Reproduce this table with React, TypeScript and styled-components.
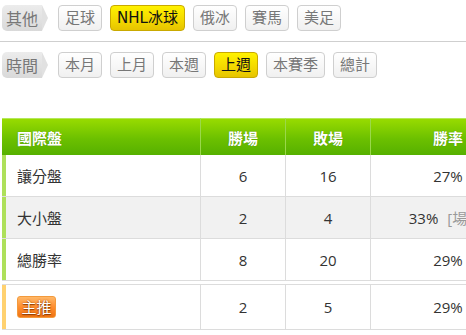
import React from "react";
import styled, { createGlobalStyle } from "styled-components";

const GlobalStyle = createGlobalStyle`
  html, body {
    margin: 0;
    padding: 0;
    background: #fff;
    overflow: hidden;
  }
  body {
    font-family: "Open Sans", "Noto Sans CJK TC", sans-serif;
    color: #333;
  }
`;

const Page = styled.div`
  width: 466px;
  height: 335px;
  overflow: hidden;
`;

const FilterRow = styled.div`
  display: flex;
  align-items: center;
  gap: 8px;
  padding: 0 2px;
  height: 26px;
`;

const Divider = styled.div`
  height: 1px;
  background: #cfcfcf;
  margin: 10px 0;
`;

const Label = styled.div`
  position: relative;
  height: 26px;
  box-sizing: border-box;
  padding: 0 4px 0 4px;
  margin-right: 8px;
  display: flex;
  align-items: center;
  font-size: 16px;
  color: #777;
  background: linear-gradient(#ececec, #d9d9d9);
  border-radius: 5px 0 0 5px;

  &::after {
    content: "";
    position: absolute;
    right: -6px;
    top: 0;
    border-style: solid;
    border-width: 13px 0 13px 6px;
    border-color: transparent transparent transparent #e1e1e1;
  }
`;

const FilterButton = styled.button<{ $active?: boolean }>`
  height: 26px;
  box-sizing: border-box;
  padding: 0 6px;
  font-family: "DejaVu Sans", "Noto Sans CJK TC", sans-serif;
  font-size: 15px;
  line-height: 24px;
  border-radius: 4px;
  cursor: pointer;
  color: ${(p) => (p.$active ? "#111" : "#777")};
  border: 1px solid ${(p) => (p.$active ? "#c9a900" : "#cfcfcf")};
  background: ${(p) =>
    p.$active
      ? "linear-gradient(#fff200, #f3d800 60%, #e6c400)"
      : "linear-gradient(#ffffff, #f0f0f0)"};
`;

const TableWrap = styled.div`
  margin-top: 40px;
  padding-left: 2px;
`;

const Table = styled.table`
  border-collapse: separate;
  border-spacing: 0;
  table-layout: fixed;
  width: 523px;
`;

const HeadCell = styled.th<{ $align?: "left" | "center" }>`
  height: 36px;
  padding: 0 0 0 ${(p) => (p.$align === "left" ? "15px" : "0")};
  text-align: ${(p) => p.$align ?? "center"};
  font-size: 15px;
  font-weight: bold;
  color: #fff;
  text-shadow: 0 0 1px rgba(40, 90, 0, 0.6);
  background: linear-gradient(#98db00, #6cc000 55%, #56b000);
  border-top: 1px solid #b4e85a;
  border-left: 1px solid #9ad84a;
  &:first-child {
    border-left: none;
  }
`;

const Row = styled.tr<{ $shade?: boolean }>`
  background: ${(p) => (p.$shade ? "#f1f1f1" : "#fff")};
`;

const Cell = styled.td<{ $stripe?: string; $align?: "left" | "center" }>`
  height: 41px;
  padding: 0 0 0 ${(p) => (p.$align === "left" ? "15px" : "0")};
  text-align: ${(p) => p.$align ?? "center"};
  font-size: 15px;
  color: #333;
  border-bottom: 1px solid #dcdcdc;
  border-left: 1px solid #dcdcdc;
  white-space: nowrap;
  overflow: hidden;
  &:first-child {
    border-left: none;
    box-shadow: inset 4px 0 0 ${(p) => p.$stripe ?? "#aee05a"};
  }
`;

const PickTable = styled(Table)`
  margin-top: 3px;
  ${Cell} {
    height: 44px;
    border-top: 1px solid #dcdcdc;
  }
`;

const Note = styled.span`
  color: #999;
  margin-left: 9px;
`;

const Badge = styled.span`
  display: inline-block;
  width: 39px;
  height: 22px;
  box-sizing: border-box;
  line-height: 20px;
  text-align: center;
  font-size: 15px;
  color: #fff;
  text-shadow: 0 1px 1px #8a3a00, 0 0 2px #a04400;
  background: linear-gradient(#ffb868, #ff8e30 50%, #f07414);
  border: 1px solid #f39a3c;
  border-radius: 3px;
  vertical-align: middle;
`;

const sports = ["足球", "NHL冰球", "俄冰", "賽馬", "美足"];
const periods = ["本月", "上月", "本週", "上週", "本賽季", "總計"];

const rows = [
  { name: "讓分盤", win: 6, lose: 16, rate: "27%" },
  { name: "大小盤", win: 2, lose: 4, rate: "33%", note: "[場次]" },
  { name: "總勝率", win: 8, lose: 20, rate: "29%" },
];

const Cols = () => (
  <colgroup>
    <col style={{ width: 198 }} />
    <col style={{ width: 85 }} />
    <col style={{ width: 85 }} />
    <col style={{ width: 155 }} />
  </colgroup>
);

export default function App() {
  return (
    <Page>
      <GlobalStyle />
      <div style={{ height: 5 }} />
      <FilterRow>
        <Label>其他</Label>
        {sports.map((s) => (
          <FilterButton key={s} $active={s === "NHL冰球"}>
            {s}
          </FilterButton>
        ))}
      </FilterRow>
      <Divider />
      <FilterRow>
        <Label>時間</Label>
        {periods.map((s) => (
          <FilterButton key={s} $active={s === "上週"}>
            {s}
          </FilterButton>
        ))}
      </FilterRow>

      <TableWrap>
        <Table>
          <Cols />
          <thead>
            <tr>
              <HeadCell $align="left">國際盤</HeadCell>
              <HeadCell>勝場</HeadCell>
              <HeadCell>敗場</HeadCell>
              <HeadCell>勝率</HeadCell>
            </tr>
          </thead>
          <tbody>
            {rows.map((r, i) => (
              <Row key={r.name} $shade={i === 1}>
                <Cell $align="left">{r.name}</Cell>
                <Cell>{r.win}</Cell>
                <Cell>{r.lose}</Cell>
                <Cell>
                  {r.rate}
                  {r.note && <Note>{r.note}</Note>}
                </Cell>
              </Row>
            ))}
          </tbody>
        </Table>
        <PickTable>
          <Cols />
          <tbody>
            <Row>
              <Cell $align="left" $stripe="#ffd170">
                <Badge>主推</Badge>
              </Cell>
              <Cell>2</Cell>
              <Cell>5</Cell>
              <Cell>29%</Cell>
            </Row>
          </tbody>
        </PickTable>
      </TableWrap>
    </Page>
  );
}
